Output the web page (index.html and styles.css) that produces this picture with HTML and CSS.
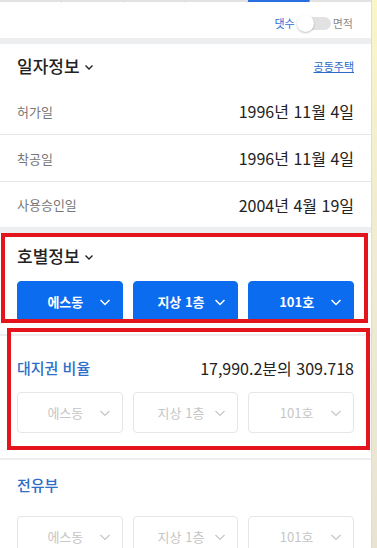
FILE: index.html
```html
<!DOCTYPE html>
<html lang="ko">
<head>
    <meta charset="UTF-8">
    <meta name="viewport" content="width=device-width, initial-scale=1.0">
    <title>건물 정보</title>
    <link rel="stylesheet" href="styles.css">
</head>
<body>
    <div class="panel">
        <div class="tabs">
            <span class="tab"></span>
            <span class="tab"></span>
            <span class="tab"></span>
            <span class="tab"></span>
            <span class="tab active"></span>
            <span class="tab last"></span>
        </div>

        <div class="toggle-row">
            <span class="toggle-label on">댓수</span>
            <span class="toggle"><span class="knob"></span></span>
            <span class="toggle-label">면적</span>
        </div>

        <div class="band"></div>

        <div class="date-section">
            <div class="section-head">
                <h2 class="title">일자정보
                    <svg class="title-chev" width="10" height="10" viewBox="0 0 10 10"><polyline points="1.5,3.5 5,7 8.5,3.5" fill="none" stroke="#222" stroke-width="1.4"/></svg>
                </h2>
                <a class="link" href="#">공동주택</a>
            </div>
            <div class="row">
                <span class="row-label">허가일</span>
                <span class="row-value">1996년 11월 4일</span>
            </div>
            <div class="row">
                <span class="row-label">착공일</span>
                <span class="row-value">1996년 11월 4일</span>
            </div>
            <div class="row last">
                <span class="row-label">사용승인일</span>
                <span class="row-value">2004년 4월 19일</span>
            </div>
        </div>

        <div class="band"></div>

        <div class="unit-section">
            <h2 class="title">호별정보
                <svg class="title-chev" width="10" height="10" viewBox="0 0 10 10"><polyline points="1.5,3.5 5,7 8.5,3.5" fill="none" stroke="#222" stroke-width="1.4"/></svg>
            </h2>
            <div class="selects">
                <button class="select filled"><span class="select-text">에스동</span><svg width="10" height="10" viewBox="0 0 10 10"><polyline points="0.5,3 5,7.5 9.5,3" fill="none" stroke="currentColor" stroke-width="1.5"/></svg></button>
                <button class="select filled"><span class="select-text">지상 1층</span><svg width="10" height="10" viewBox="0 0 10 10"><polyline points="0.5,3 5,7.5 9.5,3" fill="none" stroke="currentColor" stroke-width="1.5"/></svg></button>
                <button class="select filled"><span class="select-text">101호</span><svg width="10" height="10" viewBox="0 0 10 10"><polyline points="0.5,3 5,7.5 9.5,3" fill="none" stroke="currentColor" stroke-width="1.5"/></svg></button>
            </div>
        </div>

        <div class="land-section">
            <div class="land-head">
                <h3 class="sub-title">대지권 비율</h3>
                <span class="row-value">17,990.2분의 309.718</span>
            </div>
            <div class="selects">
                <button class="select"><span class="select-text">에스동</span><svg width="10" height="10" viewBox="0 0 10 10"><polyline points="0.5,3 5,7.5 9.5,3" fill="none" stroke="currentColor" stroke-width="1.2"/></svg></button>
                <button class="select"><span class="select-text">지상 1층</span><svg width="10" height="10" viewBox="0 0 10 10"><polyline points="0.5,3 5,7.5 9.5,3" fill="none" stroke="currentColor" stroke-width="1.2"/></svg></button>
                <button class="select"><span class="select-text">101호</span><svg width="10" height="10" viewBox="0 0 10 10"><polyline points="0.5,3 5,7.5 9.5,3" fill="none" stroke="currentColor" stroke-width="1.2"/></svg></button>
            </div>
        </div>

        <div class="own-section">
            <h3 class="sub-title">전유부</h3>
            <div class="selects">
                <button class="select"><span class="select-text">에스동</span><svg width="10" height="10" viewBox="0 0 10 10"><polyline points="0.5,3 5,7.5 9.5,3" fill="none" stroke="currentColor" stroke-width="1.2"/></svg></button>
                <button class="select"><span class="select-text">지상 1층</span><svg width="10" height="10" viewBox="0 0 10 10"><polyline points="0.5,3 5,7.5 9.5,3" fill="none" stroke="currentColor" stroke-width="1.2"/></svg></button>
                <button class="select"><span class="select-text">101호</span><svg width="10" height="10" viewBox="0 0 10 10"><polyline points="0.5,3 5,7.5 9.5,3" fill="none" stroke="currentColor" stroke-width="1.2"/></svg></button>
            </div>
        </div>
    </div>

    <!-- annotation boxes drawn over the panel -->
    <div class="mark mark-unit"></div>
    <div class="mark mark-land"></div>
</body>
</html>
```

FILE: styles.css
```css
* {
    margin: 0;
    padding: 0;
    box-sizing: border-box;
}

body {
    font-family: "Noto Sans CJK KR", "Noto Sans", sans-serif;
    background: linear-gradient(#fbf6c6, #f1ecd2 40%, #e9e4d2);
    width: 377px;
    height: 548px;
    overflow: hidden;
    position: relative;
    color: #222;
}

.panel {
    width: 372px;
    height: 548px;
    background: #fff;
    border-right: 1px solid #dcdcdc;
    overflow: hidden;
}

.tabs {
    display: flex;
    height: 3px;
}

.tab {
    width: 62px;
    border-top: 2px solid #e2e2e2;
    border-right: 1px solid #e2e2e2;
}

.tab.active {
    border-top-color: #2a6fe0;
}

.tab.last {
    flex: 1;
    border-right: none;
}

.toggle-row {
    height: 35px;
    padding: 5px 18px 0 0;
    display: flex;
    justify-content: flex-end;
    align-items: center;
}

.toggle-label {
    font-size: 11px;
    color: #8a8a8a;
}

.toggle-label.on {
    color: #2a6fd6;
}

.toggle {
    position: relative;
    width: 31px;
    height: 13px;
    margin: 0 2px 0 5px;
    border-radius: 7px;
    background: #e2e2e2;
}

.knob {
    position: absolute;
    left: -3px;
    top: -2px;
    width: 17px;
    height: 17px;
    border-radius: 50%;
    background: #fff;
    box-shadow: 0 1px 2px rgba(0, 0, 0, 0.25);
}

.band {
    height: 6px;
    background: #eceef0;
}

.section-head {
    height: 44px;
    padding: 0 17px;
    display: flex;
    justify-content: space-between;
    align-items: center;
}

.title {
    font-size: 17px;
    font-weight: 500;
    color: #222;
    display: flex;
    align-items: center;
    gap: 4px;
    line-height: 24px;
}

.title-chev {
    margin-top: 1px;
}

.link {
    font-size: 11px;
    color: #2a6cc9;
    text-decoration: underline;
}

.row {
    height: 47px;
    padding: 0 17px;
    display: flex;
    justify-content: space-between;
    align-items: center;
    border-bottom: 1px solid #e6e6e6;
}

.row.last {
    height: 45px;
    border-bottom: none;
}

.row-label {
    font-size: 13px;
    color: #777;
}

.row-value {
    font-size: 16px;
    color: #222;
}

.unit-section {
    padding: 11px 17px 12px;
    border-bottom: 2px solid #eceef0;
}

.selects {
    display: grid;
    grid-template-columns: repeat(3, 1fr);
    gap: 10px;
    margin-top: 13px;
}

.select {
    height: 41px;
    border: 1px solid #e6e6e6;
    border-radius: 4px;
    background: #fff;
    color: #c6c6c6;
    font-family: inherit;
    font-size: 13px;
    display: flex;
    align-items: center;
    padding: 0 12px 0 13px;
}

.select.filled {
    background: #0b6cf0;
    border-color: #0b6cf0;
    color: #fff;
    font-weight: 700;
}

.select-text {
    flex: 1;
    text-align: center;
}

.land-section {
    padding: 20px 17px 25px;
    border-bottom: 2px solid #eceef0;
}

.land-head {
    height: 24px;
    display: flex;
    justify-content: space-between;
    align-items: center;
}

.sub-title {
    font-size: 15px;
    font-weight: 500;
    color: #2d6ec9;
    line-height: 24px;
}

.land-section .selects {
    margin-top: 12px;
}

.own-section {
    padding: 13px 17px 0;
}

.own-section .selects {
    margin-top: 19px;
}

.mark {
    position: absolute;
    border: 4px solid #e3141c;
}

.mark-unit {
    left: 1px;
    top: 233px;
    width: 367px;
    height: 90px;
}

.mark-land {
    left: 7px;
    top: 328px;
    width: 363px;
    height: 122px;
}
```
